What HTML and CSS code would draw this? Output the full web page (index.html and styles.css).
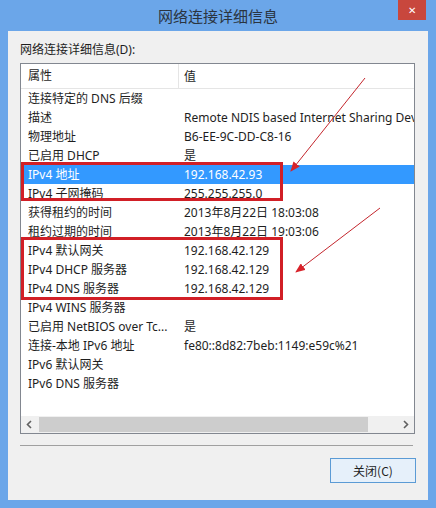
FILE: index.html
```html
<!DOCTYPE html>
<html lang="zh-CN">
<head>
    <meta charset="UTF-8">
    <title>网络连接详细信息</title>
    <link rel="stylesheet" href="styles.css">
</head>
<body>
    <div class="window">
        <div class="titlebar">
            <span class="title">网络连接详细信息</span>
            <div class="close-x">&#x2715;</div>
        </div>

        <div class="client">
            <div class="label">网络连接详细信息(D):</div>

            <div class="listbox">
                <div class="list-head">
                    <div class="col-prop">属性</div>
                    <div class="col-val">值</div>
                </div>
                <div class="list-body">
                    <div class="row"><span>连接特定的 DNS 后缀</span><span></span></div>
                    <div class="row"><span>描述</span><span>Remote NDIS based Internet Sharing Device</span></div>
                    <div class="row"><span>物理地址</span><span>B6-EE-9C-DD-C8-16</span></div>
                    <div class="row"><span>已启用 DHCP</span><span>是</span></div>
                    <div class="row selected"><span>IPv4 地址</span><span>192.168.42.93</span></div>
                    <div class="row"><span>IPv4 子网掩码</span><span>255.255.255.0</span></div>
                    <div class="row"><span>获得租约的时间</span><span>2013年8月22日 18:03:08</span></div>
                    <div class="row"><span>租约过期的时间</span><span>2013年8月22日 19:03:06</span></div>
                    <div class="row"><span>IPv4 默认网关</span><span>192.168.42.129</span></div>
                    <div class="row"><span>IPv4 DHCP 服务器</span><span>192.168.42.129</span></div>
                    <div class="row"><span>IPv4 DNS 服务器</span><span>192.168.42.129</span></div>
                    <div class="row"><span>IPv4 WINS 服务器</span><span></span></div>
                    <div class="row"><span>已启用 NetBIOS over Tc...</span><span>是</span></div>
                    <div class="row"><span>连接-本地 IPv6 地址</span><span>fe80::8d82:7beb:1149:e59c%21</span></div>
                    <div class="row"><span>IPv6 默认网关</span><span></span></div>
                    <div class="row"><span>IPv6 DNS 服务器</span><span></span></div>
                </div>
                <div class="hscroll">
                    <svg class="arrow-btn" width="17" height="15" viewBox="0 0 17 15"><path d="M10 4 L6.5 7.5 L10 11" fill="none" stroke="#606060" stroke-width="1.6"/></svg>
                    <div class="track"><div class="thumb"></div></div>
                    <svg class="arrow-btn" width="17" height="15" viewBox="0 0 17 15"><path d="M7 4 L10.5 7.5 L7 11" fill="none" stroke="#606060" stroke-width="1.6"/></svg>
                </div>
            </div>

            <div class="separator"></div>

            <div class="buttons">
                <button class="btn-close">关闭(C)</button>
            </div>
        </div>
    </div>

    <!-- red annotations drawn over the screenshot -->
    <svg class="marks" width="436" height="508" viewBox="0 0 436 508">
        <defs>
            <marker id="head" markerWidth="10" markerHeight="8" refX="9" refY="4" orient="auto" markerUnits="userSpaceOnUse">
                <path d="M0 0 L10 4 L0 8 Z" fill="#d8232a"/>
            </marker>
        </defs>
        <rect x="22.5" y="163.5" width="259" height="36" fill="none" stroke="#d11f26" stroke-width="3"/>
        <rect x="22.5" y="238.5" width="259" height="60" fill="none" stroke="#d11f26" stroke-width="3"/>
        <line x1="365" y1="78" x2="291" y2="171" stroke="#c4262d" stroke-width="1" marker-end="url(#head)"/>
        <line x1="380" y1="208" x2="296" y2="272" stroke="#c4262d" stroke-width="1" marker-end="url(#head)"/>
    </svg>
</body>
</html>
```

FILE: styles.css
```css
body {
    margin: 0;
    width: 436px;
    height: 508px;
    background-color: #6ba6e9;
    font-family: "Noto Sans", "Noto Sans CJK SC", sans-serif;
    font-size: 12px;
    color: #1e1e1e;
    position: relative;
    overflow: hidden;
}

.window {
    padding: 0 8px 8px 8px;
}

.titlebar {
    height: 31px;
    display: flex;
    align-items: center;
    justify-content: center;
    position: relative;
}

.title {
    font-family: "Noto Sans CJK SC", sans-serif;
    font-size: 15px;
    color: #2a3440;
    margin-top: -1px;
}

.close-x {
    position: absolute;
    top: 0;
    right: 2px;
    width: 28px;
    height: 20px;
    background-color: #c8473d;
    color: #ffffff;
    font-size: 10px;
    display: flex;
    align-items: center;
    justify-content: center;
}

.client {
    background-color: #f0f0f0;
    height: 469px;
    box-sizing: border-box;
    padding: 11px 13px 0 12px;
}

.label {
    line-height: 16px;
    margin-bottom: 5px;
}

.listbox {
    height: 371px;
    box-sizing: border-box;
    border: 1px solid #828790;
    background-color: #ffffff;
    display: flex;
    flex-direction: column;
}

.list-head {
    height: 24px;
    border-bottom: 1px solid #e5e5e5;
    display: flex;
    align-items: center;
    flex-shrink: 0;
}

.col-prop {
    width: 150px;
    padding-left: 7px;
    height: 24px;
    line-height: 24px;
    border-right: 1px solid #e5e5e5;
}

.col-val {
    padding-left: 5px;
}

.list-body {
    flex: 1;
    overflow: hidden;
}

.row {
    display: grid;
    grid-template-columns: 156px auto;
    height: 19px;
    line-height: 19px;
    padding-left: 7px;
    white-space: nowrap;
}

.row.selected {
    background-color: #3399ff;
    color: #ffffff;
}

.hscroll {
    height: 17px;
    display: flex;
    align-items: center;
    background-color: #f0f0f0;
    flex-shrink: 0;
}

.arrow-btn {
    flex-shrink: 0;
}

.track {
    flex: 1;
    height: 15px;
    padding-left: 1px;
}

.thumb {
    width: 329px;
    height: 15px;
    background-color: #cdcdcd;
}

.separator {
    margin-top: 11px;
    height: 1px;
    background-color: #a0a0a0;
    margin-right: 2px;
}

.buttons {
    display: flex;
    justify-content: flex-end;
    margin-top: 12px;
    margin-right: -1px;
}

.btn-close {
    width: 86px;
    height: 25px;
    border: 1px solid #5b9bd5;
    background-color: #e6f0fa;
    font-family: "Noto Sans CJK SC", sans-serif;
    font-size: 12px;
    color: #1e1e1e;
    padding: 0;
}

.marks {
    position: absolute;
    top: 0;
    left: 0;
    pointer-events: none;
}
```
